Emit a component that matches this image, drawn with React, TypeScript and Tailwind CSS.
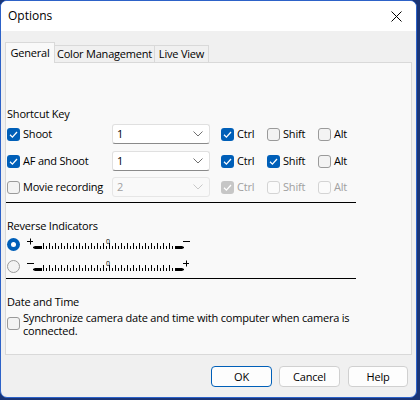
import React from "react";

const font = "font-['Segoe_UI','Open_Sans',sans-serif]";

function CheckBox({ checked = false, disabled = false }: { checked?: boolean; disabled?: boolean }) {
  if (checked) {
    return (
      <span
        className={`shrink-0 block w-[13px] h-[13px] rounded-[3px] flex items-center justify-center ${
          disabled ? "bg-[#c6c6c6]" : "bg-[#005fb8]"
        }`}
      >
        <svg width="13" height="13" viewBox="0 0 13 13">
          <path d="M3 6.8 L5.4 9.1 L10 4" fill="none" stroke="#fff" strokeWidth="1.3" />
        </svg>
      </span>
    );
  }
  return (
    <span
      className={`shrink-0 block w-[13px] h-[13px] rounded-[3px] border ${
        disabled ? "border-[#d4d4d4] bg-[#fbfbfb]" : "border-[#9a9a9a] bg-[#f3f3f3]"
      }`}
    />
  );
}

function Radio({ checked = false }: { checked?: boolean }) {
  return checked ? (
    <span className="shrink-0 w-[13px] h-[13px] rounded-full bg-[#005fb8] flex items-center justify-center">
      <span className="w-[5px] h-[5px] rounded-full bg-white" />
    </span>
  ) : (
    <span className="shrink-0 w-[13px] h-[13px] rounded-full border border-[#9a9a9a] bg-[#f3f3f3]" />
  );
}

function Combo({ value, disabled = false }: { value: string; disabled?: boolean }) {
  return (
    <div
      className={`w-[98px] h-[20px] rounded-[3px] border flex items-center justify-between pl-[4px] pr-[6px] ${
        disabled
          ? "border-[#e6e6e6] bg-[#f9f9f9] text-[#a0a0a0]"
          : "border-[#e0e0e0] border-b-[#8a8a8a] bg-white text-black"
      }`}
    >
      <span>{value}</span>
      <svg width="10" height="6" viewBox="0 0 10 6">
        <path d="M0.5 0.5 L5 5 L9.5 0.5" fill="none" stroke={disabled ? "#c8c8c8" : "#707070"} strokeWidth="1" />
      </svg>
    </div>
  );
}

function Labeled({
  label,
  checked,
  disabled,
  className = "",
}: {
  label: string;
  checked?: boolean;
  disabled?: boolean;
  className?: string;
}) {
  return (
    <div className={`flex items-center gap-[3px] ${className}`}>
      <CheckBox checked={checked} disabled={disabled} />
      <span className={disabled ? "text-[#a0a0a0]" : "text-black"}>{label}</span>
    </div>
  );
}

function ShortcutRow({
  label,
  on,
  value,
  ctrl,
  shift,
  disabled,
  className = "",
}: {
  label: string;
  on: boolean;
  value: string;
  ctrl: boolean;
  shift: boolean;
  disabled?: boolean;
  className?: string;
}) {
  return (
    <div className={`flex items-center h-[20px] ${className}`}>
      <div className="w-[105px] flex items-center gap-[3px]">
        <CheckBox checked={on} />
        <span>{label}</span>
      </div>
      <Combo value={value} disabled={disabled} />
      <Labeled label="Ctrl" checked={ctrl} disabled={disabled} className="ml-[11px] w-[46px]" />
      <Labeled label="Shift" checked={shift} disabled={disabled} className="w-[51px]" />
      <Labeled label="Alt" disabled={disabled} />
    </div>
  );
}

// ruler drawing used by the indicator options
function Scale({ left, right }: { left: string; right: string }) {
  const ticks = [];
  for (let i = 0; i < 44; i++) {
    const x = 17.5 + i * 3;
    const tall = i % 2 === 0;
    ticks.push(<line key={i} x1={x} x2={x} y1={tall ? 5 : 8} y2={11} stroke="#000" strokeWidth="1" />);
  }
  const sign = (s: string, x: number) =>
    s === "+" ? (
      <g key={x} stroke="#000" strokeWidth="1">
        <line x1={x} x2={x + 6} y1={3.5} y2={3.5} />
        <line x1={x + 3.5} x2={x + 3.5} y1={0.5} y2={6.5} />
      </g>
    ) : (
      <line key={x} x1={x} x2={x + 7} y1={3.5} y2={3.5} stroke="#000" strokeWidth="1" />
    );
  return (
    <svg width="166" height="13" viewBox="0 0 166 13" className="shrink-0">
      {sign(left, 1)}
      <path d="M7 9 L9 8 L16 8 L16 11 L9 11 L7 10 Z" fill="#000" />
      {ticks}
      <text x="82" y="5.5" fontSize="7" fontFamily="'Open Sans', sans-serif" textAnchor="middle">
        0
      </text>
      <path d="M149 8 L156 8 L158 9 L158 10 L156 11 L149 11 Z" fill="#000" />
      {sign(right, 157)}
    </svg>
  );
}

export default function App() {
  return (
    <div
      className={`w-[420px] h-[400px] bg-[#1a3576] overflow-hidden text-[11px] leading-[16px] tracking-[-0.2px] text-black ${font}`}
    >
      <div className="w-[417px] h-[398px] rounded-[7px] border border-[#2d62c8] bg-[#f0f0f0] flex flex-col overflow-hidden">
        {/* Title bar */}
        <div className="h-[30px] bg-white flex items-center justify-between pl-[7px] pr-[14px]">
          <span className="text-[12px] tracking-normal">Options</span>
          <svg width="11" height="11" viewBox="0 0 11 11">
            <path d="M0.5 0.5 L10.5 10.5 M10.5 0.5 L0.5 10.5" stroke="#000" strokeWidth="1" />
          </svg>
        </div>

        <div className="pt-[11px] pl-[4px]">
          {/* Tabs */}
          <div className="flex items-end h-[20px]">
            <div className="relative z-10 h-[21px] -mb-px w-[50px] bg-[#f9f9f9] border border-b-0 border-[#d9d9d9] flex items-center justify-center">
              General
            </div>
            <div className="h-[17px] w-[100px] bg-[#f0f0f0] border border-l-0 border-b-0 border-[#d9d9d9] flex items-center justify-center whitespace-nowrap">
              Color Management
            </div>
            <div className="h-[17px] w-[54px] bg-[#f0f0f0] border border-l-0 border-b-0 border-[#d9d9d9] flex items-center justify-center whitespace-nowrap">
              Live View
            </div>
          </div>

          {/* Panel */}
          <div className="w-[407px] h-[293px] bg-[#f9f9f9] border border-[#d9d9d9] pl-[1px] pt-[43px] flex flex-col">
            <div>Shortcut Key</div>
            <ShortcutRow className="mt-[2px]" label="Shoot" on value="1" ctrl shift={false} />
            <ShortcutRow className="mt-[7px]" label="AF and Shoot" on value="1" ctrl shift />
            <ShortcutRow className="mt-[6px]" label="Movie recording" on={false} value="2" ctrl shift={false} disabled />
            <div className="mt-[5px] -ml-px w-[350px] h-px bg-black" />

            <div className="mt-[15px]">Reverse Indicators</div>
            <div className="mt-[3px] h-[14px] flex items-center gap-[6px]">
              <Radio checked />
              <Scale left="+" right="-" />
            </div>
            <div className="mt-[8px] h-[14px] flex items-center gap-[6px]">
              <Radio />
              <Scale left="-" right="+" />
            </div>
            <div className="mt-[5px] -ml-px w-[350px] h-px bg-black" />

            <div className="mt-[15px]">Date and Time</div>
            <div className="mt-px flex items-start gap-[3px] leading-[13px]">
              <div className="mt-[6px]">
                <CheckBox />
              </div>
              <div>
                Synchronize camera date and time with computer when camera is
                <br />
                connected.
              </div>
            </div>
          </div>
        </div>

        {/* Buttons */}
        <div className="flex justify-end gap-[7px] pt-[11px] pr-[8px]">
          <button className="w-[61px] h-[21px] rounded-[4px] border border-[#005fb8] bg-[#fdfdfd]">OK</button>
          <button className="w-[61px] h-[21px] rounded-[4px] border border-[#d0d0d0] bg-[#fdfdfd]">Cancel</button>
          <button className="w-[60px] h-[21px] rounded-[4px] border border-[#d0d0d0] bg-[#fdfdfd] ml-px">Help</button>
        </div>
      </div>
    </div>
  );
}
